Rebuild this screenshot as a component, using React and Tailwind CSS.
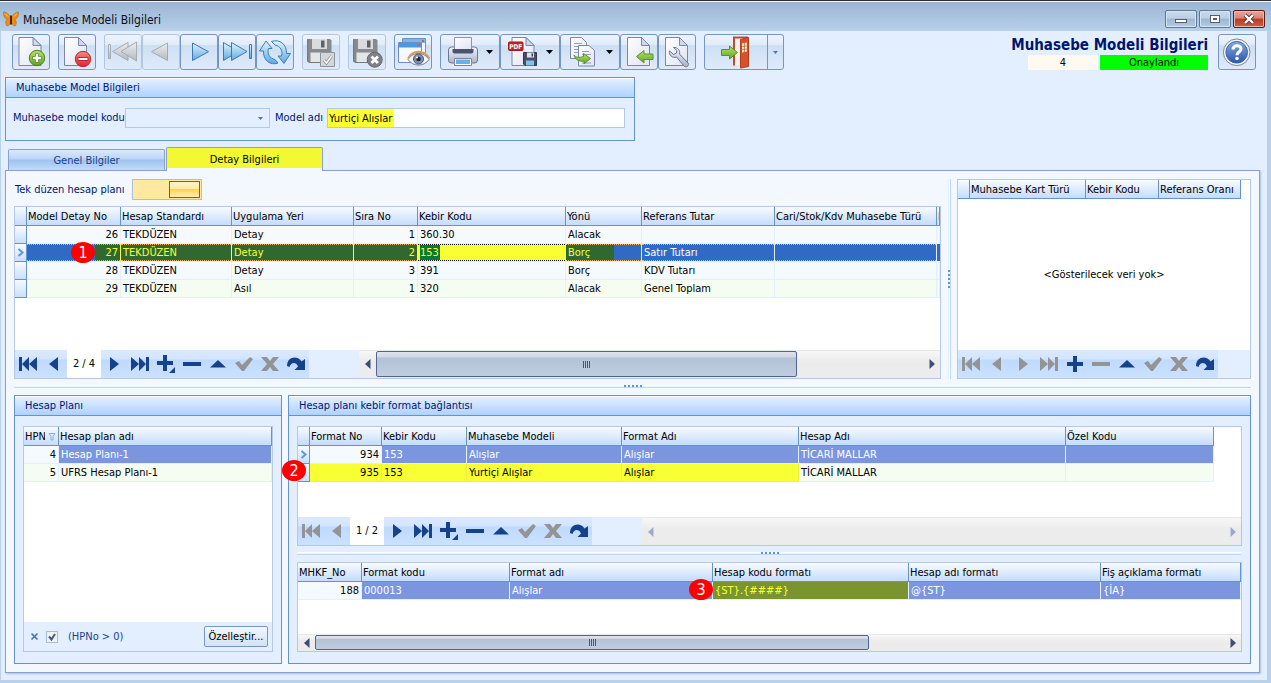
import React, { useState } from 'react';
import clsx from 'clsx';

const PAGE = 'M0 0h14l8 8v20h-22z';

const Defs = () => (
  <svg width="0" height="0" className="absolute" aria-hidden="true">
    <defs>
      <linearGradient id="paper" x1="0" y1="0" x2="1" y2="1">
        <stop offset="0" stopColor="#ffffff" />
        <stop offset="1" stopColor="#dfe3f3" />
      </linearGradient>
      <linearGradient id="blue" x1="0" y1="0" x2="0" y2="1">
        <stop offset="0" stopColor="#e3f3fd" />
        <stop offset="1" stopColor="#5da9e0" />
      </linearGradient>
      <linearGradient id="grey" x1="0" y1="0" x2="0" y2="1">
        <stop offset="0" stopColor="#eeeff1" />
        <stop offset="1" stopColor="#b4b8be" />
      </linearGradient>
      <linearGradient id="green" x1="0" y1="0" x2="0" y2="1">
        <stop offset="0" stopColor="#b9e36a" />
        <stop offset="1" stopColor="#5fa524" />
      </linearGradient>
      <linearGradient id="red" x1="0" y1="0" x2="0" y2="1">
        <stop offset="0" stopColor="#ff8585" />
        <stop offset="1" stopColor="#e3202b" />
      </linearGradient>
      <linearGradient id="help" x1="0" y1="0" x2="0" y2="1">
        <stop offset="0" stopColor="#86ade0" />
        <stop offset="1" stopColor="#2a55ad" />
      </linearGradient>
      <linearGradient id="steel" x1="0" y1="0" x2="0" y2="1">
        <stop offset="0" stopColor="#f3f5fa" />
        <stop offset="1" stopColor="#a9b3c9" />
      </linearGradient>
    </defs>
  </svg>
);

const Page = ({ x = 7, y = 3.5 }) => (
  <g transform={`translate(${x} ${y})`} stroke="#7a86ad" strokeWidth="1" strokeLinejoin="round">
    <path d={PAGE} fill="url(#paper)" />
    <path d="M14 0v8h8z" fill="#cfd7ee" />
  </g>
);

const Floppy = () => (
  <g>
    <path d="M6 5h22l1.5 1.5v22h-23l-1.500-1.500v-22z" fill="#868a8f" />
    <path d="M10 5h15v10h-15z" fill="#d9dbdd" />
    <path d="M19 6.500h3.500v7h-3.500z" fill="#5d6064" />
    <path d="M8.500 18.500h17v10h-17z" fill="#e4e5e7" />
    <path d="M5.500 5.500v21.500l1.500 1.500h22" fill="none" stroke="#74787d" />
  </g>
);

const icons = {
  add: (
    <>
      <Page />
      <circle cx="25" cy="24" r="7.700" fill="url(#green)" stroke="#4d7f1c" />
      <path d="M25 19.500v9M20.500 24h9" stroke="#4d7f1c" strokeWidth="4" />
      <path d="M25 20v8M21 24h8" stroke="#fff" strokeWidth="2.400" />
    </>
  ),
  remove: (
    <>
      <Page x={6.5} />
      <circle cx="25" cy="25" r="7.700" fill="url(#red)" stroke="#b52a32" />
      <path d="M20 23.500h10v3h-10z" fill="#fff" stroke="#b52a32" />
    </>
  ),
  first: (
    <g fill="url(#grey)" stroke="#a6abb3">
      <path d="M4.500 10.500h2v14h-2z" />
      <path d="M24 8.500v18L8.500 17.500z" />
      <path d="M32.500 8v19L17 17.500z" />
    </g>
  ),
  prev: <path d="M25.500 9v17.500L9.500 17.700z" fill="url(#grey)" stroke="#a6abb3" />,
  next: <path d="M12.500 9v17.500L28.500 17.700z" fill="url(#blue)" stroke="#3b79b8" />,
  last: (
    <g fill="url(#blue)" stroke="#3b79b8">
      <path d="M5.500 8.500v18L20.500 17.500z" />
      <path d="M13.500 8.500v18L29 17.500z" />
      <path d="M31.500 10.500h2v14h-2z" />
    </g>
  ),
  refresh: (
    <g fill="url(#blue)" stroke="#3b7fb8" strokeWidth="1" strokeLinejoin="round">
      <path d="M3.500 17L10 7l6 7.500h-3.500c-1.500 5 1 10 6.500 11l3 3.500c-8 3-15-3-14.500-12z" />
      <path d="M34.500 19.500L28 29.500l-6-7.500h3.500c1.500-5-1-10-6.500-11l-3.500-3.500c8-3 15.500 3 15 12z" />
    </g>
  ),
  save: (
    <>
      <Floppy />
      <path d="M18.500 18.500h14v14h-14z" fill="#d3d6da" stroke="#8f949a" />
      <path d="M22 26l2.500 3 5-7" fill="none" stroke="#8a8e94" strokeWidth="3" />
      <path d="M22 26l2.500 3 5-7" fill="none" stroke="#fff" strokeWidth="1.400" />
    </>
  ),
  cancel: (
    <>
      <Floppy />
      <circle cx="26.700" cy="25.700" r="7.500" fill="#7e8287" stroke="#65696e" />
      <path d="M23.500 22.500l6.400 6.400M29.900 22.500l-6.400 6.400" stroke="#fff" strokeWidth="2.800" />
    </>
  ),
  preview: (
    <>
      <path d="M8.500 4.500h23v18h-23z" fill="#f4f7fd" stroke="#6e8fc4" />
      <path d="M9 5h22v4h-22z" fill="#7fb6ea" />
      <path d="M28 6h2v2h-2z" fill="#f0513c" />
      <path d="M4.500 8.500h23v20h-23z" fill="#f6f8fd" stroke="#6e8fc4" />
      <path d="M5 9h22v4.500h-22z" fill="#4e98dd" />
      <path d="M24 10h2v2h-2z" fill="#f0513c" />
      <path d="M14 25.500c5-8 16-8 21 0c-5 7.500-16 7.500-21 0z" fill="#f4f4fa" stroke="#777b95" />
      <path d="M14 24.500c5-9 16-9 21.500 0" fill="none" stroke="#d39d5c" strokeWidth="2" />
      <circle cx="24.500" cy="25" r="5" fill="#8191ac" stroke="#4a5878" />
      <circle cx="24.500" cy="25" r="2.300" fill="#1b2540" />
      <circle cx="23" cy="23.500" r="1" fill="#fff" />
    </>
  ),
  print: (
    <>
      <rect x="8.500" y="13" width="29" height="16" rx="3" fill="url(#steel)" stroke="#6b7796" />
      <path d="M14.500 3.500h17v12h-17z" fill="url(#paper)" stroke="#8a94b4" />
      <path d="M12.500 15h21v2.500c0 1-1 2-2 2h-17c-1 0-2-1-2-2z" fill="#4b5370" />
      <path d="M14.500 24.500h17v7h-17z" fill="#fff" stroke="#7688b0" />
      <path d="M16 25.500h14v4.500h-14z" fill="#67b1ea" />
      <path d="M46 16h7l-3.500 4z" fill="#000" />
    </>
  ),
  pdf: (
    <>
      <Page x={12} />
      <rect x="8.500" y="8" width="14.500" height="8.500" rx="1" fill="#c9222c" stroke="#a3151f" />
      <text x="15.700" y="14.700" textAnchor="middle" fontSize="6.500" fontWeight="bold" fill="#fff">PDF</text>
      <path d="M23.500 18.500h13v13h-11.500l-1.500-1.500z" fill="#4a5068" stroke="#30364e" />
      <path d="M27 18.500h7v5h-7z" fill="#dfe3ee" />
      <path d="M31.500 19.500h1.500v3h-1.500z" fill="#30364e" />
      <path d="M26 26.500h8v5h-8z" fill="#7fc3f0" />
      <path d="M46 16h7l-3.500 4z" fill="#000" />
    </>
  ),
  copy: (
    <>
      <path d="M10.500 3.500h11l5 5v16h-16z" fill="url(#paper)" stroke="#7a86ad" />
      <path d="M14 9.500h8M14 12.500h8M14 15.500h8M14 18.500h8" stroke="#8fa0c4" />
      <path d="M18.500 11.500h10.500l5.500 5v15.500h-16z" fill="url(#paper)" stroke="#7a86ad" />
      <path d="M22 17.500h7M22 20.500h9M22 29h9" stroke="#8fa0c4" />
      <path d="M14 21c2 2.500 5 3 9.500 1.500v-3l7 5-6.500 5.500v-3c-5 1-9-1.500-10-6z" fill="url(#green)" stroke="#5c9126" />
      <path d="M46 16h7l-3.500 4z" fill="#000" />
    </>
  ),
  back: (
    <>
      <Page x={7.5} />
      <path d="M16.500 22.500l7.500-6v3.500h9v5.500h-9v3.500z" fill="url(#green)" stroke="#5c9126" />
    </>
  ),
  tools: (
    <>
      <Page x={7.5} />
      <path
        d="M15.500 13.500c4-.5 7 3 6 6.500l8.500 9c1.500 2-1 5-3.500 3.500l-8-9.500c-4 1.500-8-2-7-6l4 3.500 3-1.500.5-2.500z"
        fill="url(#steel)"
        stroke="#68738f"
      />
    </>
  ),
  exit: (
    <>
      <path d="M30 31.500v-28h14" fill="none" stroke="#c2492a" strokeWidth="2" />
      <path d="M31 5h6v26h-6z" fill="#f7f1ee" />
      <path d="M36.500 5.500l8-2v29l-8 1.500z" fill="#d9512c" stroke="#b23c1d" />
      <path d="M38 9.500l5-1v9l-5 1z" fill="#fbe3b6" />
      <path d="M40.500 9v9M38 12.500l5-.5M38 15.500l5-.5" stroke="#b7653a" strokeWidth=".7" />
      <path d="M17.500 15.500h8v-3.500l8 6.500-8 6.500v-3.500h-8z" fill="url(#green)" stroke="#5c9126" />
    </>
  ),
  help: (
    <>
      <circle cx="18.700" cy="18.300" r="13.300" fill="#eef1f6" stroke="#7e8794" />
      <circle cx="18.700" cy="18.300" r="10.800" fill="url(#help)" stroke="#3f62a8" />
      <path d="M15 15.500c0-5 8-5 8-.5c0 3-4 3-4 6.200" fill="none" stroke="#fff" strokeWidth="3" />
      <circle cx="19" cy="24.500" r="1.800" fill="#fff" />
    </>
  ),
};

const ToolButton = ({ icon, label, wide, disabled }) => (
  <button
    aria-label={label}
    disabled={disabled}
    className={clsx(
      'h-9 rounded-[3px] border bg-[linear-gradient(#edf4fe_0,#e0ebf9_30%,#cddff4_31%,#dfebfb_100%)]',
      wide ? 'w-[60px]' : 'w-[38px]',
      disabled ? 'border-[#b3c6e0]' : 'border-[#7595c2]'
    )}
  >
    {wide ? (
      <svg width="58" height="34" viewBox="1 1 58 34">{icons[icon]}</svg>
    ) : (
      <svg width="36" height="34" viewBox="1 1 36 34">{icons[icon]}</svg>
    )}
  </button>
);

const toolGroups = [
  [{ icon: 'add', label: 'Yeni' }],
  [{ icon: 'remove', label: 'Sil' }],
  [
    { icon: 'first', label: 'İlk kayıt', disabled: true },
    { icon: 'prev', label: 'Önceki kayıt', disabled: true },
    { icon: 'next', label: 'Sonraki kayıt' },
    { icon: 'last', label: 'Son kayıt' },
    { icon: 'refresh', label: 'Yenile' },
  ],
  [{ icon: 'save', label: 'Kaydet', disabled: true }],
  [{ icon: 'cancel', label: 'Vazgeç', disabled: true }],
  [{ icon: 'preview', label: 'Önizleme' }],
  [
    { icon: 'print', label: 'Yazdır', wide: true },
    { icon: 'pdf', label: 'PDF kaydet', wide: true },
    { icon: 'copy', label: 'Kopyala', wide: true },
    { icon: 'back', label: 'Aktar' },
    { icon: 'tools', label: 'Ayarlar' },
  ],
];

const Toolbar = () => (
  <div className="flex items-start gap-2 pl-[11px] pr-[11px] pt-[3px]">
    {toolGroups.map((group) => (
      <div key={group[0].icon} className="flex">
        {group.map((t) => <ToolButton key={t.icon} {...t} />)}
      </div>
    ))}
    <div className="flex h-9 rounded-[3px] border border-[#7595c2] bg-[linear-gradient(#edf4fe_0,#e0ebf9_30%,#cddff4_31%,#dfebfb_100%)]">
      <button aria-label="Çıkış" className="border-r border-[#7595c2]">
        <svg width="62" height="34" viewBox="1 1 62 34">{icons.exit}</svg>
      </button>
      <button aria-label="Çıkış seçenekleri">
        <svg width="15" height="34" viewBox="0 0 15 34"><path d="M5 16h5l-2.500 3z" fill="#4a76b5" /></svg>
      </button>
    </div>
    <div className="ml-auto flex flex-col items-end">
      <h1 className="h-[21px] text-[15px] leading-[22px] font-bold text-[#00156e]">Muhasebe Modeli Bilgileri</h1>
      <div className="flex gap-[2px] text-center leading-[15px] text-black">
        <span className="w-[70px] bg-[#fffaf0]">4</span>
        <span className="w-[108px] bg-[#00ff00]">Onaylandı</span>
      </div>
    </div>
    <div className="ml-[2px] flex">
      <ToolButton icon="help" label="Yardım" />
    </div>
  </div>
);

const WindowButton = ({ label, close, children }) => (
  <button
    aria-label={label}
    className={clsx(
      'h-[18px] w-8 rounded-[2px] border inset-ring',
      close
        ? 'border-[#5c1c1c] bg-[linear-gradient(#e6a99b_0,#d98373_45%,#bb3a22_50%,#cf5f45_100%)] inset-ring-[#eab9ad]'
        : 'border-[#5f7896] bg-[linear-gradient(#c8d9eb_0,#bccfe4_45%,#9db7d3_50%,#b3cbe3_100%)] inset-ring-[#d5e3f2]'
    )}
  >
    <svg width="30" height="16" viewBox="0 0 30 16">{children}</svg>
  </button>
);

const TitleBar = () => (
  <div className="flex h-[30px] items-start border-t border-[#f3f6fa] bg-linear-to-b from-[#9ab5d3] to-[#b8d0ea] pr-[6px] pl-[3px]">
    <svg width="16" height="16" viewBox="0 0 16 16" className="mt-[9px]">
      <path d="M8 7C6 3 2 .5.500 1c0 4 1 6.500 4 7.500C2 9.500 2.500 13.500 4 15c2 0 3.500-3 4-5c.5 2 2 5 4 5c1.500-1.500 2-5.500-.5-6.500c3-1 4-3.500 4-7.500C14 .5 10 3 8 7z" fill="#f08c14" stroke="#b5640f" strokeWidth=".6" />
      <path d="M8 4.500v9" stroke="#4a2408" strokeWidth="2" />
      <path d="M2 2.500l3 3M14 2.500l-3 3" stroke="#ffd15c" />
    </svg>
    <span className="mt-[10px] ml-1 text-xs leading-4 text-[#0c0c14]">Muhasebe Modeli Bilgileri</span>
    <div className="mt-2 ml-auto flex gap-[2px]">
      <WindowButton label="Simge durumuna küçült">
        <rect x="9.500" y="8.500" width="11" height="3" fill="#fff" stroke="#565e6b" />
      </WindowButton>
      <WindowButton label="Ekranı kapla">
        <rect x="10.500" y="4.500" width="9" height="7" fill="#fff" stroke="#565e6b" />
        <rect x="13.500" y="7.500" width="3" height="1" fill="#fff" stroke="#565e6b" />
      </WindowButton>
      <WindowButton label="Kapat" close>
        <path d="M11 4l8 8M19 4l-8 8" stroke="#5b3036" strokeWidth="4" />
        <path d="M11 4l8 8M19 4l-8 8" stroke="#fff" strokeWidth="2.400" />
      </WindowButton>
    </div>
  </div>
);

const GroupBox = ({ title, className, bodyClass, children }) => (
  <section className={clsx('flex flex-col border border-[#6593cf] bg-[#e3efff]', className)}>
    <h2 className="h-5 border-t border-b border-t-white border-b-[#6593cf] bg-linear-to-b from-[#e3efff] to-[#aed2ff] pl-[10px] leading-[18px] text-[#00156e]">
      {title}
    </h2>
    <div className={bodyClass}>{children}</div>
  </section>
);

const Badge = ({ className, children }) => (
  <span className={clsx('absolute z-10 flex h-[21px] w-6 items-center justify-center rounded-[50%] bg-[#fe0000] text-base text-white', className)}>
    {children}
  </span>
);

const HEAD = 'h-[19px] border-r border-b border-[#6593cf] bg-linear-to-b from-[#f8fbff] to-[#c5dcfb] p-0 pl-px text-left font-normal';
const CELL = 'h-[18px] border-r border-b border-[#e3efff] p-0';
const INDICATOR = 'border-r border-b border-[#6593cf] bg-linear-to-b from-[#f8fbff] to-[#c9dffc] p-0';

const IndicatorArrow = () => (
  <svg width="11" height="17" viewBox="0 0 11 17" className="block"><path d="M3.500 5l4 3.500-4 3.500" fill="none" stroke="#5f97dc" strokeWidth="2" /></svg>
);

// columns: { title, width, head }
const Grid = ({ columns, indicator, className, children }) => (
  <table className={clsx('table-fixed border-separate border-spacing-0 text-black', className)}>
    <colgroup>
      {indicator && <col className="w-3" />}
      {columns.map((c, i) => <col key={i} className={c.width} />)}
    </colgroup>
    <thead>
      <tr>
        {indicator && <th className={HEAD} />}
        {columns.map((c, i) => (
          <th key={i} className={HEAD}>
            <div className="flex items-center overflow-hidden pt-px whitespace-nowrap">{c.head || c.title}</div>
          </th>
        ))}
      </tr>
    </thead>
    <tbody>{children}</tbody>
  </table>
);

const Cell = ({ right, td, inner, children }) => (
  <td className={clsx(CELL, td)}>
    <div className={clsx('relative h-[17px] whitespace-nowrap', right ? 'pr-[2px] text-right' : 'pl-[2px]', inner || 'leading-[18px]')}>
      {children}
    </div>
  </td>
);

const NAVY = '#15428b';
const GREY = '#949494';

const navIcons = {
  first: <path d="M1 3h3v14h-3zM4 10l7-7v14zM11 10l8-7v14z" />,
  prev: <path d="M14 3v14L5 10z" />,
  next: <path d="M6 3v14l9-7z" />,
  last: <path d="M16 3h3v14h-3zM16 10l-7-7v14zM9 10L1 3v14z" />,
  plus: <path d="M8 2h4v6h6v4h-6v6h-4v-6H2V8h6z" />,
  plusMenu: <path d="M7 1h4v6h6v4h-6v6H7v-6H1V7h6zM19 13v6h-6z" />,
  minus: <path d="M1 8h18v4H1z" />,
  up: <path d="M10 6l8 7.500H2z" />,
  check: <path d="M1 9l4-2 3 4 8-8 3 2-9 12H8z" />,
  cross: <path d="M1 3h6l3 4 3-4h6l-6 7 6 7h-6l-3-4-3 4H1l6-7z" />,
  redo: <path d="M1 12C1 2 12 1 15.500 7.500L19 5v11H8.500l3.500-3.500C10 7.500 5 8 3.500 13z" />,
};

const NavButton = ({ icon, label, off }) => (
  <button aria-label={label} disabled={off} className="flex w-[26px] items-center justify-center bg-[linear-gradient(#dbe9ff_0,#d3e5ff_9px,#bfdaff_10px,#cbe1ff_100%)] pr-px">
    <svg width="20" height="20" viewBox="0 0 20 20" fill={off ? GREY : NAVY}>{navIcons[icon]}</svg>
  </button>
);

const Navigator = ({ position, back, forward, edit, menu }) => (
  <div className="flex h-7">
    <NavButton icon="first" label="İlk" off={!back} />
    <NavButton icon="prev" label="Önceki" off={!back} />
    {position && <span className="w-[34px] bg-white text-center leading-7 text-black">{position}</span>}
    <NavButton icon="next" label="Sonraki" off={!forward} />
    <NavButton icon="last" label="Son" off={!forward} />
    <NavButton icon={menu ? 'plusMenu' : 'plus'} label="Ekle" />
    <NavButton icon="minus" label="Çıkar" off={!edit} />
    <NavButton icon="up" label="Düzenle" />
    <NavButton icon="check" label="Onayla" off />
    <NavButton icon="cross" label="İptal" off />
    <NavButton icon="redo" label="Tazele" />
  </div>
);

const ScrollBar = ({ thumb, off, className }) => (
  <div className={clsx('flex border-t border-[#e8e8e8] bg-linear-to-b from-[#f7f7f7] to-[#ececec] to-40%', className)}>
    <button aria-label="Sola kaydır" disabled={off} className="flex w-[17px] items-center justify-center">
      <svg width="6" height="10" viewBox="0 0 6 10"><path d="M5.500 0v10L0 5z" fill={off ? '#9aa9cc' : '#3c4d78'} /></svg>
    </button>
    <div className="flex flex-1">
      {thumb && (
        <div className={clsx('flex items-center justify-center gap-px rounded-[2px] border border-[#51658f] bg-[linear-gradient(#dde4ec_0,#cfd9e4_20%,#b3c2d6_25%,#bfcddf_100%)]', thumb)}>
          {[0, 1, 2, 3].map((n) => <i key={n} className="h-[7px] w-px bg-[#44577f]" />)}
        </div>
      )}
    </div>
    <button aria-label="Sağa kaydır" disabled={off} className="flex w-[17px] items-center justify-center">
      <svg width="6" height="10" viewBox="0 0 6 10"><path d="M.5 0v10L6 5z" fill={off ? '#9aa9cc' : '#3c4d78'} /></svg>
    </button>
  </div>
);

const Dots = ({ vertical }) => (
  <div className={clsx('flex gap-[2px]', vertical ? 'flex-col' : 'h-[3px]')}>
    {[0, 1, 2, 3, 4].map((n) => <i key={n} className="h-[2px] w-[2px] bg-[#6593cf]" />)}
  </div>
);

const Splitter = ({ className }) => (
  <div className={clsx('flex h-[3px] justify-center bg-[linear-gradient(#fff_1px,#eaf3ff_1px,#eaf3ff_2px,#bcd9fb_2px)]', className)}>
    <Dots />
  </div>
);

const detailColumns = [
  { title: 'Model Detay No', width: 'w-[94px]' },
  { title: 'Hesap Standardı', width: 'w-[111px]' },
  { title: 'Uygulama Yeri', width: 'w-[122px]' },
  { title: 'Sıra No', width: 'w-[64px]' },
  { title: 'Kebir Kodu', width: 'w-[148px]' },
  { title: 'Yönü', width: 'w-[76px]' },
  { title: 'Referans Tutar', width: 'w-[133px]' },
  { title: 'Cari/Stok/Kdv Muhasebe Türü', width: 'w-[162px]' },
  { title: 'R' },
];

const detailRows = [
  { no: 26, std: 'TEKDÜZEN', place: 'Detay', order: 1, code: '360.30', side: 'Alacak', ref: '' },
  { no: 27, std: 'TEKDÜZEN', place: 'Detay', order: 2, code: '153', side: 'Borç', ref: 'Satır Tutarı' },
  { no: 28, std: 'TEKDÜZEN', place: 'Detay', order: 3, code: '391', side: 'Borç', ref: 'KDV Tutarı' },
  { no: 29, std: 'TEKDÜZEN', place: 'Asıl', order: 1, code: '320', side: 'Alacak', ref: 'Genel Toplam' },
];

const FOCUS = 'border-y border-dotted border-[#e6b060] leading-4';

const SelectedDetail = ({ row, code, setCode }) => {
  const green = 'border-r-[#f5ff3a] bg-[#316830] text-[#f5ff3a]';
  const blue = 'bg-[#316ac5] text-white';
  return (
    <tr>
      <td className={INDICATOR}><IndicatorArrow /></td>
      <Cell right td="border-r-[#f5ff3a] bg-[linear-gradient(90deg,#316ac5_68px,#316830_68px)] text-[#f5ff3a]" inner={FOCUS}>
        <Badge className="-top-[3px] left-11">1</Badge>
        {row.no}
      </Cell>
      <Cell td={green} inner={FOCUS}>{row.std}</Cell>
      <Cell td={green} inner={FOCUS}>{row.place}</Cell>
      <Cell right td={green} inner={FOCUS}>{row.order}</Cell>
      <Cell td="bg-[#f8ff33]" inner="border-y border-dotted border-black leading-4">
        <input
          aria-label="Kebir Kodu"
          value={code}
          onChange={(e) => setCode(e.target.value)}
          className="block h-[15px] w-5 bg-[#077a35] p-0 text-[#f8ff33]"
        />
      </Cell>
      <Cell td="bg-[linear-gradient(90deg,#316830_48px,#316ac5_48px)] text-[#f5ff3a]" inner={FOCUS}>{row.side}</Cell>
      <Cell td={blue} inner={FOCUS}>{row.ref}</Cell>
      <Cell td={blue} inner={FOCUS} />
      <td className="border-b border-[#e3efff] bg-[#316ac5] p-0" />
    </tr>
  );
};

const DetailGrid = () => {
  const [code, setCode] = useState('153');
  return (
    <div className="flex flex-1 flex-col overflow-hidden border border-[#b5c9e6] bg-white">
      <div className="min-h-[143px] flex-1">
        <Grid columns={detailColumns} indicator className="w-full">
          {detailRows.map((r, i) =>
            i === 1 ? (
              <SelectedDetail key={r.no} row={r} code={code} setCode={setCode} />
            ) : (
              <tr key={r.no} className={i === 3 ? 'bg-[#f5fdf3]' : 'bg-[#f5faff]'}>
                <td className={INDICATOR} />
                <Cell right>{r.no}</Cell>
                <Cell>{r.std}</Cell>
                <Cell>{r.place}</Cell>
                <Cell right>{r.order}</Cell>
                <Cell>{r.code}</Cell>
                <Cell>{r.side}</Cell>
                <Cell>{r.ref}</Cell>
                <Cell />
                <Cell />
              </tr>
            )
          )}
        </Grid>
      </div>
      <div className="flex bg-[#e3efff]">
        <Navigator position="2 / 4" back forward edit menu />
        <ScrollBar thumb="w-[77%]" className="ml-[50px] flex-1 pb-px" />
      </div>
    </div>
  );
};

const cardColumns = [
  { title: 'Muhasebe Kart Türü', width: 'w-[116px]' },
  { title: 'Kebir Kodu', width: 'w-[73px]' },
  { title: 'Referans Oranı', width: 'w-[82px]' },
];

const CardGrid = () => (
  <div className="flex w-[294px] flex-col border border-[#b5c9e6] bg-white">
    <Grid columns={cardColumns} indicator className="w-[283px]" />
    <div className="flex flex-1 items-center justify-center text-black">&lt;Gösterilecek veri yok&gt;</div>
    <div className="bg-[#e3efff]"><Navigator /></div>
  </div>
);

const planColumns = [
  {
    title: 'HPNo',
    width: 'w-[35px]',
    head: (
      <>
        <span className="w-5 overflow-hidden">HPNo</span>
        <svg width="8" height="9" viewBox="0 0 8 9" className="ml-[3px]"><path d="M1 1.500h6l-2 3v3.500H3V4.500z" fill="#dbe9fb" stroke="#8fadd6" /></svg>
      </>
    ),
  },
  { title: 'Hesap plan adı' },
];

const PlanPanel = () => {
  const [filtered, setFiltered] = useState(true);
  return (
    <GroupBox title="Hesap Planı" className="w-[268px]" bodyClass="flex flex-1 px-2 pt-[10px] pb-[11px]">
      <div className="flex flex-1 flex-col border border-[#b5c9e6] bg-white">
        <div className="flex-1">
          <Grid columns={planColumns} className="w-full">
            <tr>
              <Cell right td="bg-[#f5faff]">4</Cell>
              <Cell td="bg-[#7b96df] text-white">Hesap Planı-1</Cell>
            </tr>
            <tr className="bg-[#f5fdf3]">
              <Cell right>5</Cell>
              <Cell>UFRS Hesap Planı-1</Cell>
            </tr>
          </Grid>
        </div>
        <div className="flex h-[29px] items-center bg-[#e3efff] pr-1 pl-[6px] text-[#15428b]">
          <button aria-label="Filtreyi kaldır">
            <svg width="9" height="9" viewBox="0 0 9 9"><path d="M1.500 1.500l6 6M7.500 1.500l-6 6" stroke="#3c6fb3" strokeWidth="1.500" /></svg>
          </button>
          <span className="relative ml-[7px] h-3 w-3">
            <input
              id="plan-filter"
              type="checkbox"
              checked={filtered}
              onChange={() => setFiltered(!filtered)}
              className="block h-3 w-3 appearance-none border border-[#a5bcdc] bg-[#f0f0f0]"
            />
            {filtered && (
              <svg width="12" height="12" viewBox="0 0 12 12" className="pointer-events-none absolute inset-0"><path d="M3 5.500l2.500 3L9 3" fill="none" stroke="#47597d" strokeWidth="2" /></svg>
            )}
          </span>
          <label htmlFor="plan-filter" className="ml-[10px]">(HPNo &gt; 0)</label>
          <button className="ml-auto h-[21px] w-16 rounded-[2px] border border-[#7595c2] bg-linear-to-b from-[#f1f7ff] to-[#d2e2f6] whitespace-nowrap text-black">
            Özelleştir...
          </button>
        </div>
      </div>
    </GroupBox>
  );
};

const formatColumns = [
  { title: 'Format No', width: 'w-[72px]' },
  { title: 'Kebir Kodu', width: 'w-[85px]' },
  { title: 'Muhasebe Modeli', width: 'w-[155px]' },
  { title: 'Format Adı', width: 'w-[177px]' },
  { title: 'Hesap Adı', width: 'w-[267px]' },
  { title: 'Özel Kodu', width: 'w-[148px]' },
];

const linkColumns = [
  { title: 'MHKF_No', width: 'w-[64px]' },
  { title: 'Format kodu', width: 'w-[148px]' },
  { title: 'Format adı', width: 'w-[203px]' },
  { title: 'Hesap kodu formatı', width: 'w-[196px]' },
  { title: 'Hesap adı formatı', width: 'w-[192px]' },
  { title: 'Fiş açıklama formatı' },
];

const SEL = 'bg-[#7b96df] text-white';
const MARK = 'border-[#eff03a] bg-[#f8ff33]';

const FormatPanel = () => (
  <GroupBox title="Hesap planı kebir format bağlantısı" className="min-w-0 flex-1" bodyClass="flex flex-1 flex-col px-2 pt-[10px] pb-[11px]">
    <div className="border border-[#b5c9e6] bg-white">
      <div className="min-h-[90px]">
        <Grid columns={formatColumns} indicator className="w-[916px]">
          <tr>
            <td className={INDICATOR}><IndicatorArrow /></td>
            <Cell right td="bg-[#f5faff]">934</Cell>
            <Cell td={SEL}>153</Cell>
            <Cell td={SEL}>Alışlar</Cell>
            <Cell td={SEL}>Alışlar</Cell>
            <Cell td={SEL}>TİCARİ MALLAR</Cell>
            <Cell td={SEL} />
          </tr>
          <tr>
            <td className={INDICATOR}>
              <div className="relative h-[17px]"><Badge className="-top-1 -left-4">2</Badge></div>
            </td>
            <Cell right td={MARK}>935</Cell>
            <Cell td={MARK}>153</Cell>
            <Cell td={MARK}>Yurtiçi Alışlar</Cell>
            <Cell td={MARK}>Alışlar</Cell>
            <Cell td="bg-[#f5fdf3]">TİCARİ MALLAR</Cell>
            <Cell td="bg-[#f5fdf3]" />
          </tr>
        </Grid>
      </div>
      <div className="flex bg-[#e3efff]">
        <Navigator position="1 / 2" forward edit menu />
        <ScrollBar off className="ml-[50px] flex-1" />
      </div>
    </div>
    <Splitter className="mt-[6px] mb-[7px]" />
    <div className="flex flex-1 flex-col border border-[#b5c9e6] bg-white">
      <div className="min-h-[71px] flex-1">
        <Grid columns={linkColumns} className="w-full">
          <tr>
            <Cell right td="bg-[#f5faff]">188</Cell>
            <Cell td={SEL}>000013</Cell>
            <Cell td={SEL}>Alışlar</Cell>
            <Cell td="bg-[#7a952f] text-[#f8ff33]">
              <Badge className="-top-[3px] -left-6">3</Badge>
              {'{ST}.{####}'}
            </Cell>
            <Cell td={SEL}>{'@{ST}'}</Cell>
            <Cell td={SEL}>{'{İA}'}</Cell>
          </tr>
        </Grid>
      </div>
      <ScrollBar thumb="w-[61%]" className="h-[17px] pb-px" />
    </div>
  </GroupBox>
);

const ModelForm = () => {
  const [name, setName] = useState('Yurtiçi Alışlar');
  return (
    <GroupBox title="Muhasebe Model Bilgileri" className="mt-[7px] ml-1 w-[630px]" bodyClass="flex items-center pt-[10px] pr-[9px] pb-3 pl-[7px] text-[#00156e]">
      <label htmlFor="model-code" className="w-28 whitespace-nowrap">Muhasebe model kodu</label>
      <span className="relative flex">
        <select id="model-code" className="h-5 w-[145px] appearance-none border border-[#b5c9e6] bg-[#e3efff]">
          <option value=""></option>
        </select>
        <svg width="5" height="3" viewBox="0 0 5 3" className="pointer-events-none absolute top-[9px] right-[7px]"><path d="M0 0h5l-2.500 3z" fill="#4a76b5" /></svg>
      </span>
      <label htmlFor="model-name" className="ml-[5px] w-[52px] whitespace-nowrap">Model adı</label>
      <input
        id="model-name"
        value={name}
        onChange={(e) => setName(e.target.value)}
        className="h-5 min-w-0 flex-1 border border-[#b5c9e6] bg-[linear-gradient(90deg,#ffff33_66px,#fff_66px)] pl-px text-black"
      />
    </GroupBox>
  );
};

const App = () => {
  const [tab, setTab] = useState('detail');
  const [uniform, setUniform] = useState(true);

  return (
    <div className="flex min-h-screen flex-col border-t border-[#2c2a33] bg-[#b9d1ea] font-['DejaVu_Sans_Condensed','Noto_Sans',sans-serif] text-[11px] leading-4">
      <Defs />
      <TitleBar />
      <main className="flex flex-1 flex-col border-r-4 border-b-[3px] border-l border-[#b9d1ea] bg-[#e3efff]">
        <Toolbar />
        <ModelForm />

        <div role="tablist" className="mt-[6px] ml-[7px] flex items-end gap-px">
          <button
            role="tab"
            aria-selected={tab === 'general'}
            onClick={() => setTab('general')}
            className="h-[21px] w-[157px] rounded-t-[2px] border border-b-0 border-[#8ba0cc] bg-[linear-gradient(#dbe9fb_0,#bcd5f5_45%,#9fc3ef_50%,#c2dbfa_100%)] pt-[2px] text-[#15428b]"
          >
            Genel Bilgiler
          </button>
          <button
            role="tab"
            aria-selected={tab === 'detail'}
            onClick={() => setTab('detail')}
            className="relative z-10 -mb-px h-6 w-[157px] rounded-t-[2px] border border-b-0 border-[#8ba0cc] bg-[linear-gradient(#f4f833_20px,#f3f8ff_20px)] pt-px text-black"
          >
            Detay Bilgileri
          </button>
        </div>

        <div className="mr-[7px] mb-[7px] ml-1 flex flex-1 flex-col border border-[#8ba0cc] bg-[#f3f8ff] p-2 shadow-[1px_1px_2px_#a9bfe0]">
          <div className="flex">
            <div className="flex min-w-0 flex-1 flex-col">
              <div className="mb-[6px] flex h-[21px] items-center text-[#00156e]">
                <label htmlFor="uniform-plan" className="ml-px w-[117px] whitespace-nowrap">Tek düzen hesap planı</label>
                <input
                  id="uniform-plan"
                  type="checkbox"
                  role="switch"
                  checked={uniform}
                  onChange={() => setUniform(!uniform)}
                  className="flex h-[21px] w-[70px] appearance-none border border-[#a9c0e2] bg-[#ffe8a0] p-px before:h-[17px] before:w-[31px] before:border before:border-[#4a6694] before:bg-[linear-gradient(#fff3c8_0,#ffe9a4_45%,#ffd34e_50%,#ffefb4_100%)] checked:justify-end"
                />
              </div>
              <DetailGrid />
            </div>
            <div className="mr-[6px] ml-[7px] flex w-[3px] items-center bg-[linear-gradient(90deg,#e3efff_1px,#fff_1px,#fff_2px,#bcd9fb_2px)]">
              <Dots vertical />
            </div>
            <CardGrid />
          </div>

          <Splitter className="mt-[6px] mb-[7px]" />

          <div className="flex flex-1 gap-[6px]">
            <PlanPanel />
            <FormatPanel />
          </div>
        </div>
      </main>
    </div>
  );
};

export default App;
